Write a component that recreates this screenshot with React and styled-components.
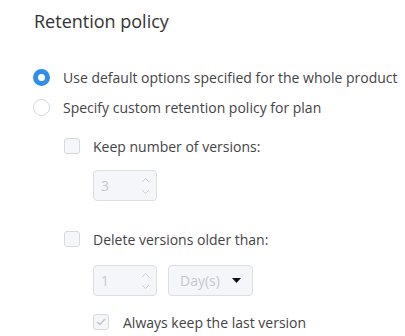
import React from "react";
import styled, { createGlobalStyle } from "styled-components";

const GlobalStyle = createGlobalStyle`
  body {
    margin: 0;
    background: #ffffff;
    font-family: "Open Sans", "Noto Sans", sans-serif;
    color: #444;
  }
`;

const Page = styled.div`
  padding: 8px 0 0 33px;
  width: 372px;
  height: 328px;
  overflow: hidden;
`;

const Title = styled.h2`
  margin: 0;
  font-size: 18px;
  font-weight: 400;
  line-height: 26px;
  color: #333;
  padding-left: 1px;
`;

const RadioGroup = styled.div`
  margin-top: 28px;
  display: flex;
  flex-direction: column;
`;

const Row = styled.label`
  display: flex;
  align-items: center;
  height: ${props => props.h || 30}px;
  font-size: 14px;
  white-space: nowrap;
  color: #444;
`;

const Radio = styled.span`
  box-sizing: border-box;
  width: 17px;
  height: 17px;
  border-radius: 50%;
  flex: none;
  margin-right: 13px;
  background: #fff;
  border: ${props => (props.checked ? "5px solid #2f8ee5" : "1px solid #d3d5da")};
`;

const Nested = styled.div`
  padding-left: 31px;
  display: flex;
  flex-direction: column;
`;

const Box = styled.span`
  box-sizing: border-box;
  width: 16px;
  height: 16px;
  flex: none;
  border-radius: 3px;
  margin-right: ${props => props.gap || 13}px;
  border: 1px solid #d6d8dd;
  background: #f5f6fa;
  display: flex;
  align-items: center;
  justify-content: center;
`;

const Indent = styled.div`
  padding-left: 29px;
  display: flex;
  gap: 11px;
  margin: ${props => props.m || "0"};
`;

const Spin = styled.div`
  box-sizing: border-box;
  width: 64px;
  height: 31px;
  border: 1px solid #dcdee3;
  border-radius: 4px;
  background: #f5f6fa;
  display: flex;
  align-items: center;
  justify-content: space-between;
  padding: 0 6px 0 7px;
  font-size: 14px;
  color: #c5c7cc;
`;

const Arrows = styled.div`
  display: flex;
  flex-direction: column;
  gap: 6px;
`;

const Select = styled.div`
  box-sizing: border-box;
  width: 85px;
  height: 31px;
  border: 1px solid #dcdee3;
  border-radius: 4px;
  background: #f5f6fa;
  display: flex;
  align-items: center;
  justify-content: space-between;
  padding: 0 11px 0 11px;
  font-size: 14px;
  color: #c5c7cc;
`;

const Chevron = ({ up }) => (
  <svg width="9" height="6" viewBox="0 0 9 6">
    <path
      d={up ? "M1 5 L4.5 1.5 L8 5" : "M1 1 L4.5 4.5 L8 1"}
      fill="none"
      stroke="#c9cbd0"
      strokeWidth="1"
    />
  </svg>
);

const Caret = () => (
  <svg width="9" height="5" viewBox="0 0 9 5">
    <path d="M0 0 L9 0 L4.5 5 Z" fill="#111" />
  </svg>
);

const Check = () => (
  <svg width="10" height="8" viewBox="0 0 10 8">
    <path d="M1 4 L4 6.5 L9 1" fill="none" stroke="#c2c4c9" strokeWidth="1.5" />
  </svg>
);

const App = () => (
  <>
    <GlobalStyle />
    <Page>
      <Title>Retention policy</Title>
      <RadioGroup>
        <Row>
          <Radio checked />
          Use default options specified for the whole product
        </Row>
        <Row>
          <Radio />
          Specify custom retention policy for plan
        </Row>
      </RadioGroup>
      <Nested>
        <Row h={34} style={{ marginTop: 7 }}>
          <Box />
          Keep number of versions:
        </Row>
        <Indent m="7px 0 0 0">
          <Spin>
            3
            <Arrows>
              <Chevron up />
              <Chevron />
            </Arrows>
          </Spin>
        </Indent>
        <Row h={34} style={{ marginTop: 21 }}>
          <Box />
          Delete versions older than:
        </Row>
        <Indent m="9px 0 0 0">
          <Spin>
            1
            <Arrows>
              <Chevron up />
              <Chevron />
            </Arrows>
          </Spin>
          <Select>
            Day(s)
            <Caret />
          </Select>
        </Indent>
        <Indent m="11px 0 0 0">
          <Row h={30}>
            <Box gap={14}>
              <Check />
            </Box>
            Always keep the last version
          </Row>
        </Indent>
      </Nested>
    </Page>
  </>
);

export default App;
